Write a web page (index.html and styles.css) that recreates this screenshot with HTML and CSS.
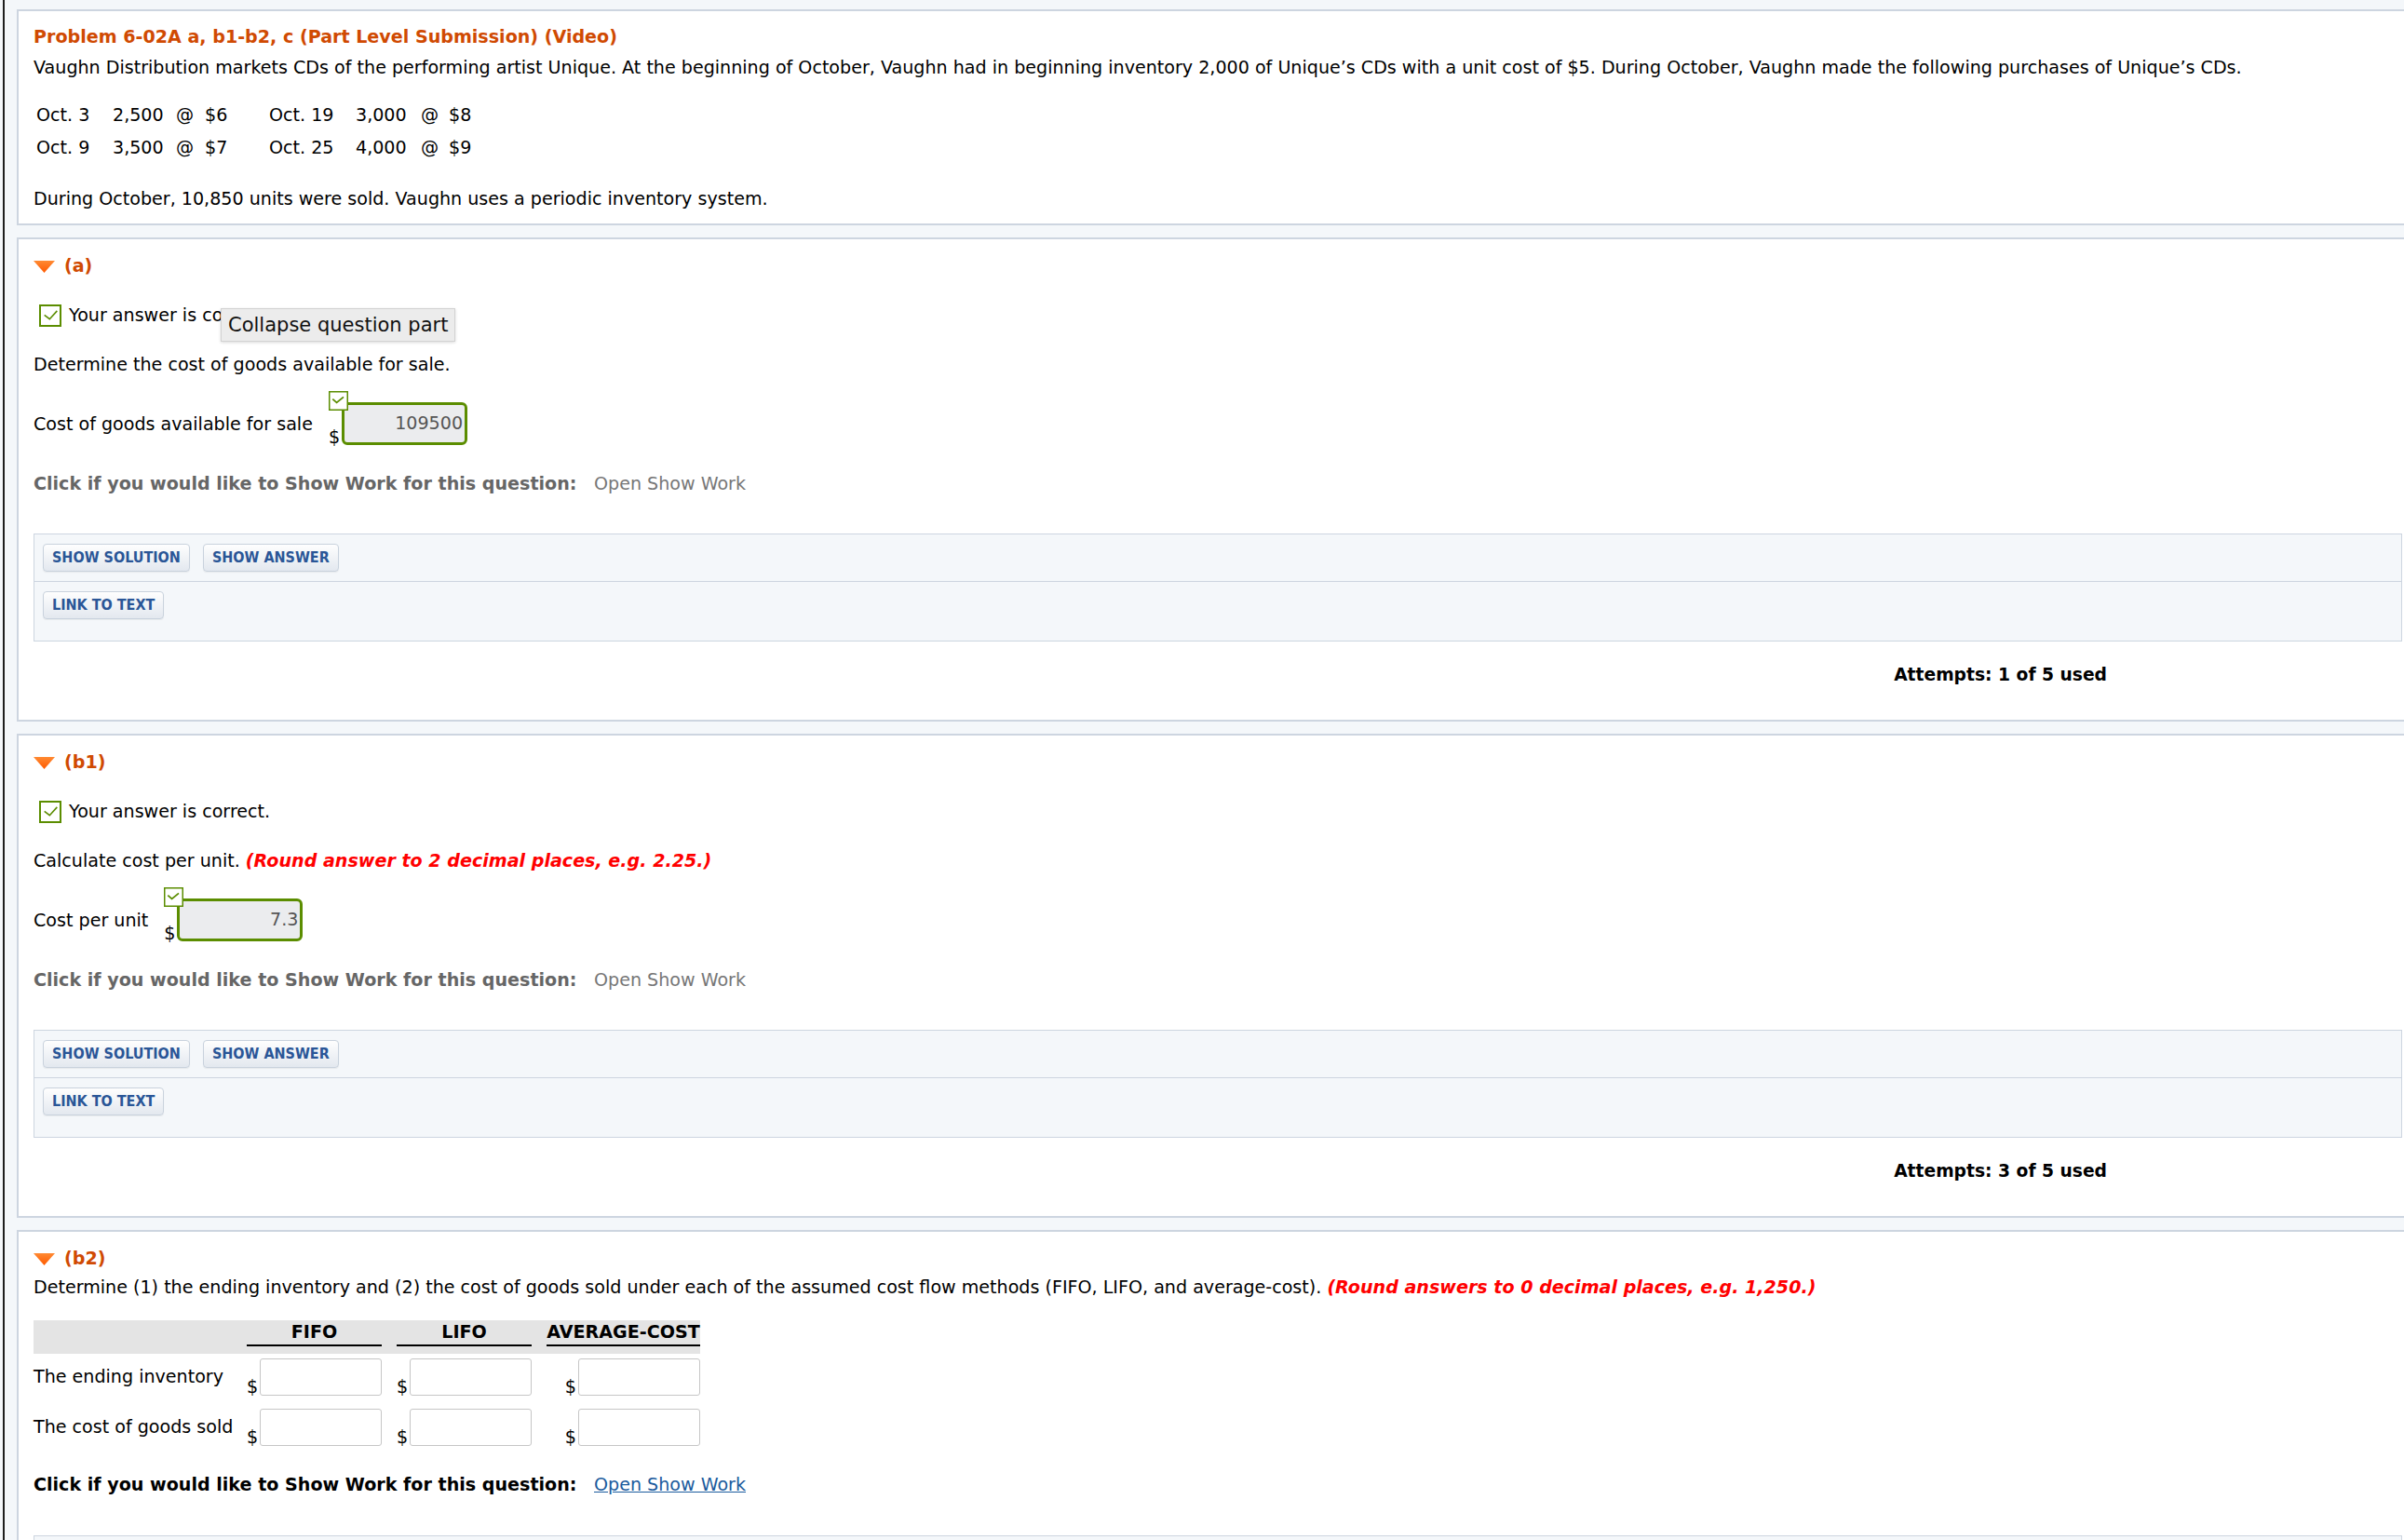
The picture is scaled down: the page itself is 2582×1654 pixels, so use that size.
FILE: index.html
```html
<!DOCTYPE html>
<html lang="en">
<head>
<meta charset="utf-8">
<title>Problem 6-02A</title>
<link rel="stylesheet" href="styles.css">
</head>
<body>
<div class="page">

  <section class="card intro">
    <h1 class="title">Problem 6-02A a, b1-b2, c (Part Level Submission) (Video)</h1>
    <p class="para">Vaughn Distribution markets CDs of the performing artist Unique. At the beginning of October, Vaughn had in beginning inventory 2,000 of Unique’s CDs with a unit cost of $5. During October, Vaughn made the following purchases of Unique’s CDs.</p>
    <div class="purchases">
      <span>Oct. 3</span><span>2,500</span><span>@</span><span>$6</span><span>Oct. 19</span><span>3,000</span><span>@</span><span>$8</span>
      <span>Oct. 9</span><span>3,500</span><span>@</span><span>$7</span><span>Oct. 25</span><span>4,000</span><span>@</span><span>$9</span>
    </div>
    <p class="para sold">During October, 10,850 units were sold. Vaughn uses a periodic inventory system.</p>
  </section>

  <section class="card part">
    <div class="part-head">
      <svg class="tri" width="23" height="13" viewBox="0 0 23 13"><defs><linearGradient id="tg1" x1="0" y1="0" x2="0" y2="1"><stop offset="0" stop-color="#ff8a33"/><stop offset="1" stop-color="#ff5a00"/></linearGradient></defs><polygon points="0,0 23,0 11.5,13" fill="url(#tg1)"/></svg>
      <span>(a)</span>
    </div>
    <div class="result">
      <svg class="chk" width="24" height="24" viewBox="0 0 24 24"><rect x="1" y="1" width="22" height="22" fill="#fff" stroke="#5b8d00" stroke-width="2"/><path d="M5.7 11.3 L11.3 15.7 L19.3 6.9" fill="none" stroke="#5b8d00" stroke-width="1.6"/></svg>
      <span>Your answer is correct.</span>
      <div class="tooltip">Collapse question part</div>
    </div>
    <p class="q">Determine the cost of goods available for sale.</p>
    <div class="answer-row">
      <span class="ans-label">Cost of goods available for sale</span>
      <div class="ans-group">
        <svg class="mini-chk" width="21" height="21" viewBox="0 0 21 21"><rect x="0.75" y="0.75" width="19.5" height="19.5" fill="#fff" stroke="#5b8d00" stroke-width="1.5"/><path d="M4.3 8.6 L8.6 12.4 L16 6.4" fill="none" stroke="#5b8d00" stroke-width="1.8"/></svg>
        <span class="dollar">$</span>
        <div class="ans-input">109500</div>
      </div>
    </div>
    <div class="showwork">
      <span class="sw-label">Click if you would like to Show Work for this question:</span>
      <span class="sw-link">Open Show Work</span>
    </div>
    <div class="tools">
      <div class="tools-row"><span class="btn">SHOW SOLUTION</span><span class="btn">SHOW ANSWER</span></div>
      <div class="tools-row last"><span class="btn">LINK TO TEXT</span></div>
    </div>
    <div class="attempts">Attempts: 1 of 5 used</div>
  </section>

  <section class="card part">
    <div class="part-head">
      <svg class="tri" width="23" height="13" viewBox="0 0 23 13"><defs><linearGradient id="tg2" x1="0" y1="0" x2="0" y2="1"><stop offset="0" stop-color="#ff8a33"/><stop offset="1" stop-color="#ff5a00"/></linearGradient></defs><polygon points="0,0 23,0 11.5,13" fill="url(#tg2)"/></svg>
      <span>(b1)</span>
    </div>
    <div class="result">
      <svg class="chk" width="24" height="24" viewBox="0 0 24 24"><rect x="1" y="1" width="22" height="22" fill="#fff" stroke="#5b8d00" stroke-width="2"/><path d="M5.7 11.3 L11.3 15.7 L19.3 6.9" fill="none" stroke="#5b8d00" stroke-width="1.6"/></svg>
      <span>Your answer is correct.</span>
    </div>
    <p class="q">Calculate cost per unit. <em class="note">(Round answer to 2 decimal places, e.g. 2.25.)</em></p>
    <div class="answer-row">
      <span class="ans-label">Cost per unit</span>
      <div class="ans-group">
        <svg class="mini-chk" width="21" height="21" viewBox="0 0 21 21"><rect x="0.75" y="0.75" width="19.5" height="19.5" fill="#fff" stroke="#5b8d00" stroke-width="1.5"/><path d="M4.3 8.6 L8.6 12.4 L16 6.4" fill="none" stroke="#5b8d00" stroke-width="1.8"/></svg>
        <span class="dollar">$</span>
        <div class="ans-input">7.3</div>
      </div>
    </div>
    <div class="showwork">
      <span class="sw-label">Click if you would like to Show Work for this question:</span>
      <span class="sw-link">Open Show Work</span>
    </div>
    <div class="tools">
      <div class="tools-row"><span class="btn">SHOW SOLUTION</span><span class="btn">SHOW ANSWER</span></div>
      <div class="tools-row last"><span class="btn">LINK TO TEXT</span></div>
    </div>
    <div class="attempts">Attempts: 3 of 5 used</div>
  </section>

  <section class="card part last-card">
    <div class="part-head">
      <svg class="tri" width="23" height="13" viewBox="0 0 23 13"><defs><linearGradient id="tg3" x1="0" y1="0" x2="0" y2="1"><stop offset="0" stop-color="#ff8a33"/><stop offset="1" stop-color="#ff5a00"/></linearGradient></defs><polygon points="0,0 23,0 11.5,13" fill="url(#tg3)"/></svg>
      <span>(b2)</span>
    </div>
    <p class="q tight">Determine (1) the ending inventory and (2) the cost of goods sold under each of the assumed cost flow methods (FIFO, LIFO, and average-cost). <em class="note">(Round answers to 0 decimal places, e.g. 1,250.)</em></p>
    <div class="grid-table">
      <div class="t-row t-head">
        <span></span>
        <span class="th">FIFO</span>
        <span class="th">LIFO</span>
        <span class="th">AVERAGE-COST</span>
      </div>
      <div class="t-row t-data">
        <span class="t-label">The ending inventory</span>
        <span class="t-cell"><span class="dollar">$</span><span class="t-input"></span></span>
        <span class="t-cell"><span class="dollar">$</span><span class="t-input"></span></span>
        <span class="t-cell"><span class="dollar">$</span><span class="t-input"></span></span>
      </div>
      <div class="t-row t-data">
        <span class="t-label">The cost of goods sold</span>
        <span class="t-cell"><span class="dollar">$</span><span class="t-input"></span></span>
        <span class="t-cell"><span class="dollar">$</span><span class="t-input"></span></span>
        <span class="t-cell"><span class="dollar">$</span><span class="t-input"></span></span>
      </div>
    </div>
    <div class="showwork active">
      <span class="sw-label">Click if you would like to Show Work for this question:</span>
      <span class="sw-link">Open Show Work</span>
    </div>
    <div class="tools bottom"></div>
  </section>

</div>
</body>
</html>
```

FILE: styles.css
```css
html, body {
  margin: 0;
  padding: 0;
}

html {
  height: 1654px;
  overflow: hidden;
}

body {
  background: #f4f7fa;
  font-family: "DejaVu Sans", Verdana, sans-serif;
  font-size: 19.1px;
  color: #000;
  overflow: hidden;
  height: 1654px;
  padding-left: 3px;
  box-sizing: border-box;
}

.page {
  border-left: 2px solid #1e1e1e;
  padding: 10px 0 0 13px;
  height: 1654px;
  box-sizing: border-box;
  overflow: hidden;
}

.card {
  width: 2580px;
  box-sizing: border-box;
  background: #fff;
  border: 2px solid #cdd5e0;
  padding: 14px 16px 33px;
  margin-bottom: 13px;
}

.card.last-card {
  padding-bottom: 0;
  border-bottom: 0;
  margin-bottom: 0;
}

.intro {
  padding: 13px 16px 11px;
}

.title {
  margin: 0;
  font-size: 19.1px;
  line-height: 30px;
  font-weight: bold;
  color: #d04a02;
}

.para {
  margin: 3px 0 0;
  line-height: 30px;
}

.para.sold {
  margin-top: 23px;
}

.purchases {
  margin-top: 18px;
  padding-left: 3px;
  display: grid;
  grid-template-columns: 82px 68px 31px 69px 93px 70px 30px auto;
  line-height: 35px;
}

.part-head {
  display: flex;
  align-items: center;
  gap: 10px;
  height: 30px;
  font-weight: bold;
  color: #d04a02;
  line-height: 30px;
}

.result {
  position: relative;
  margin-top: 23px;
  display: flex;
  align-items: center;
  gap: 8px;
  padding-left: 6px;
  line-height: 30px;
}

.chk {
  display: block;
  flex: none;
}

.tooltip {
  position: absolute;
  left: 201px;
  top: 7px;
  height: 36px;
  box-sizing: border-box;
  padding: 0 7px;
  background: #ececec;
  border: 1px solid #d2d2d2;
  box-shadow: 0 1px 3px rgba(0, 0, 0, 0.15);
  font-size: 21px;
  line-height: 34px;
  color: #111;
  white-space: nowrap;
}

.q {
  margin: 23px 0 0;
  line-height: 30px;
}

.q.tight {
  margin-top: 1px;
}

.note {
  font-weight: bold;
  font-style: italic;
  color: #ff0000;
}

.answer-row {
  margin-top: 25px;
  display: flex;
  align-items: center;
  height: 46px;
}

.ans-group {
  position: relative;
  margin-left: 17px;
  display: flex;
  align-items: flex-end;
  gap: 2px;
  height: 46px;
}

.mini-chk {
  position: absolute;
  left: 0;
  top: -12px;
  z-index: 2;
}

.dollar {
  line-height: 20px;
  margin-bottom: -2px;
}

.ans-input {
  width: 135px;
  height: 46px;
  box-sizing: border-box;
  border: 3px solid #5b8d00;
  border-radius: 6px;
  background: #ebecee;
  color: #555;
  text-align: right;
  padding-right: 2px;
  line-height: 40px;
}

.showwork {
  margin-top: 27px;
  display: grid;
  grid-template-columns: 602px auto;
  line-height: 30px;
}

.sw-label {
  font-weight: bold;
  color: #666;
  white-space: nowrap;
}

.sw-link {
  color: #777;
}

.showwork.active .sw-label {
  color: #000;
}

.showwork.active .sw-link {
  color: #1b5b9d;
  text-decoration: underline;
}

.tools {
  margin-top: 38px;
  background: #f4f7fa;
  border: 1px solid #cdd5e0;
}

.tools.bottom {
  margin-top: 39px;
  height: 40px;
  border-bottom: 0;
}

.tools-row {
  display: flex;
  gap: 14px;
  padding: 10px 9px;
  border-bottom: 1px solid #cdd5e0;
}

.tools-row.last {
  border-bottom: 0;
  padding-bottom: 23px;
}

.btn {
  display: inline-block;
  height: 30px;
  box-sizing: border-box;
  padding: 0 9px;
  border: 1px solid #c9d2dd;
  border-radius: 4px;
  background: linear-gradient(#fefefe, #e3e8ef);
  box-shadow: 0 1px 1px rgba(0, 0, 0, 0.06);
  font-family: "DejaVu Sans Condensed", "DejaVu Sans", sans-serif;
  font-stretch: condensed;
  font-size: 16px;
  font-weight: bold;
  line-height: 28px;
  color: #2a5697;
  white-space: nowrap;
}

.attempts {
  margin-top: 21px;
  width: 2227px;
  text-align: right;
  font-weight: bold;
  font-size: 18.7px;
  line-height: 30px;
}

.grid-table {
  margin-top: 20px;
}

.t-row {
  display: grid;
  grid-template-columns: 213px 145px 145px 165px;
  column-gap: 16px;
  width: 716px;
}

.t-head {
  background: #e4e4e4;
  padding-bottom: 8px;
}

.th {
  font-weight: bold;
  text-align: center;
  line-height: 26px;
  border-bottom: 2px solid #000;
}

.t-data {
  align-items: center;
  margin-top: 5px;
}

.t-data + .t-data {
  margin-top: 14px;
}

.t-label {
  white-space: nowrap;
  line-height: 30px;
}

.t-cell {
  display: flex;
  justify-content: flex-end;
  align-items: flex-end;
  gap: 2px;
  height: 40px;
}

.t-cell .dollar {
  margin-bottom: -1px;
}

.t-input {
  display: block;
  width: 131px;
  height: 40px;
  box-sizing: border-box;
  border: 1px solid #c6c6c6;
  border-radius: 3px;
  background: #fff;
}
```
